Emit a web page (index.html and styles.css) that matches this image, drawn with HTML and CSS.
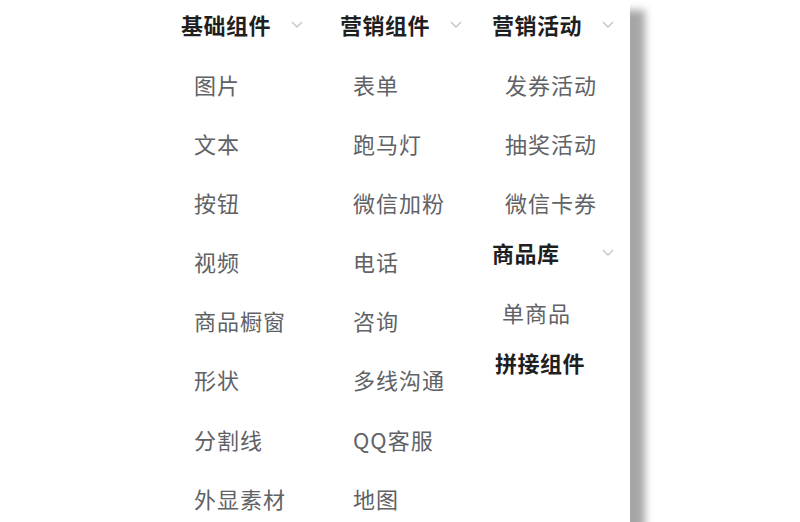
FILE: index.html
```html
<!DOCTYPE html>
<html lang="zh-CN">
<head>
<meta charset="utf-8">
<title>组件菜单</title>
<link rel="stylesheet" href="styles.css">
</head>
<body>
<div class="panel">
  <div class="col">
    <div class="head"><span class="title">基础组件</span><svg class="chev" viewBox="0 0 12 7"><polyline points="1,1 6,6 11,1"/></svg></div>
    <div class="item">图片</div>
    <div class="item">文本</div>
    <div class="item">按钮</div>
    <div class="item">视频</div>
    <div class="item">商品橱窗</div>
    <div class="item">形状</div>
    <div class="item">分割线</div>
    <div class="item">外显素材</div>
  </div>
  <div class="col">
    <div class="head"><span class="title">营销组件</span><svg class="chev" viewBox="0 0 12 7"><polyline points="1,1 6,6 11,1"/></svg></div>
    <div class="item">表单</div>
    <div class="item">跑马灯</div>
    <div class="item">微信加粉</div>
    <div class="item">电话</div>
    <div class="item">咨询</div>
    <div class="item">多线沟通</div>
    <div class="item">QQ客服</div>
    <div class="item">地图</div>
  </div>
  <div class="col">
    <div class="head"><span class="title">营销活动</span><svg class="chev" viewBox="0 0 12 7"><polyline points="1,1 6,6 11,1"/></svg></div>
    <div class="item">发券活动</div>
    <div class="item">抽奖活动</div>
    <div class="item">微信卡券</div>
    <div class="head"><span class="title">商品库</span><svg class="chev" viewBox="0 0 12 7"><polyline points="1,1 6,6 11,1"/></svg></div>
    <div class="item item-tight">单商品</div>
    <div class="head head-plain"><span class="title">拼接组件</span></div>
  </div>
</div>
</body>
</html>
```
FILE: styles.css
```css
html, body {
  margin: 0;
  padding: 0;
  background: #ffffff;
  overflow: hidden;
}

body {
  font-family: "Noto Sans CJK SC", "Noto Sans", sans-serif;
  height: 522px;
}

.panel {
  margin-left: 160px;
  width: 449px;
  height: 640px;
  padding-left: 21px;
  background: #ffffff;
  box-shadow: 15px 10px 8px rgba(0, 0, 0, 0.35);
  display: grid;
  grid-template-columns: 159px 152px 1fr;
  align-items: start;
}

.col {
  display: flex;
  flex-direction: column;
}

.head {
  width: 122px;
  height: 49px;
  padding-bottom: 2px;
  display: flex;
  align-items: center;
  justify-content: space-between;
}

.title {
  font-size: 22px;
  font-weight: 700;
  letter-spacing: 0.5px;
  color: #1f1f1f;
  line-height: 49px;
}

.head-plain {
  padding-left: 3px;
}

.chev {
  width: 12px;
  height: 7px;
  fill: none;
  stroke: #c0c4cc;
  stroke-width: 1.3;
}

.item {
  height: 40px;
  line-height: 40px;
  padding: 13px 0 6.1px 13px;
  font-size: 22px;
  letter-spacing: 1px;
  color: #606266;
}

.item-tight {
  padding-left: 10px;
}
```
